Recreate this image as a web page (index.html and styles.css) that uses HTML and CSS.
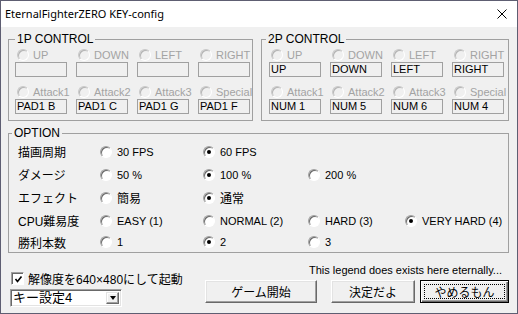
FILE: index.html
```html
<!DOCTYPE html>
<html lang="ja">
<head>
    <meta charset="UTF-8">
    <title>EternalFighterZERO KEY-config</title>
    <link rel="stylesheet" href="styles.css">
</head>
<body>
    <div class="window">
        <!-- Title bar -->
        <div class="titlebar">
            <span class="title">EternalFighterZERO KEY-config</span>
            <svg class="close" width="10" height="10" viewBox="0 0 10 10">
                <path d="M0.5 0.5L9.5 9.5M9.5 0.5L0.5 9.5" stroke="#000" stroke-width="1"/>
            </svg>
        </div>

        <div class="client">
            <!-- Key assignment -->
            <div class="controls">
                <fieldset class="group p1">
                    <legend>1P CONTROL</legend>
                    <div class="keys">
                        <div class="key"><div class="key-label"><span class="radio off"></span>UP</div><div class="keybox"></div></div>
                        <div class="key"><div class="key-label"><span class="radio off"></span>DOWN</div><div class="keybox"></div></div>
                        <div class="key"><div class="key-label"><span class="radio off"></span>LEFT</div><div class="keybox"></div></div>
                        <div class="key"><div class="key-label"><span class="radio off"></span>RIGHT</div><div class="keybox"></div></div>
                        <div class="key"><div class="key-label"><span class="radio off"></span>Attack1</div><div class="keybox">PAD1 B</div></div>
                        <div class="key"><div class="key-label"><span class="radio off"></span>Attack2</div><div class="keybox">PAD1 C</div></div>
                        <div class="key"><div class="key-label"><span class="radio off"></span>Attack3</div><div class="keybox">PAD1 G</div></div>
                        <div class="key"><div class="key-label"><span class="radio off"></span>Special</div><div class="keybox">PAD1 F</div></div>
                    </div>
                </fieldset>

                <fieldset class="group p2">
                    <legend>2P CONTROL</legend>
                    <div class="keys">
                        <div class="key"><div class="key-label"><span class="radio off"></span>UP</div><div class="keybox">UP</div></div>
                        <div class="key"><div class="key-label"><span class="radio off"></span>DOWN</div><div class="keybox">DOWN</div></div>
                        <div class="key"><div class="key-label"><span class="radio off"></span>LEFT</div><div class="keybox">LEFT</div></div>
                        <div class="key"><div class="key-label"><span class="radio off"></span>RIGHT</div><div class="keybox">RIGHT</div></div>
                        <div class="key"><div class="key-label"><span class="radio off"></span>Attack1</div><div class="keybox">NUM 1</div></div>
                        <div class="key"><div class="key-label"><span class="radio off"></span>Attack2</div><div class="keybox">NUM 5</div></div>
                        <div class="key"><div class="key-label"><span class="radio off"></span>Attack3</div><div class="keybox">NUM 6</div></div>
                        <div class="key"><div class="key-label"><span class="radio off"></span>Special</div><div class="keybox">NUM 4</div></div>
                    </div>
                </fieldset>
            </div>

            <!-- Options -->
            <fieldset class="group option">
                <legend>OPTION</legend>
                <div class="rows">
                    <div class="row">
                        <span class="name">描画周期</span>
                        <span class="opt"><span class="radio"></span>30 FPS</span>
                        <span class="opt"><span class="radio on"></span>60 FPS</span>
                    </div>
                    <div class="row">
                        <span class="name">ダメージ</span>
                        <span class="opt"><span class="radio"></span>50 %</span>
                        <span class="opt"><span class="radio on"></span>100 %</span>
                        <span class="opt"><span class="radio"></span>200 %</span>
                    </div>
                    <div class="row">
                        <span class="name">エフェクト</span>
                        <span class="opt ja"><span class="radio"></span>簡易</span>
                        <span class="opt ja"><span class="radio on"></span>通常</span>
                    </div>
                    <div class="row">
                        <span class="name">CPU難易度</span>
                        <span class="opt"><span class="radio"></span>EASY (1)</span>
                        <span class="opt"><span class="radio"></span>NORMAL (2)</span>
                        <span class="opt"><span class="radio"></span>HARD (3)</span>
                        <span class="opt"><span class="radio on"></span>VERY HARD (4)</span>
                    </div>
                    <div class="row">
                        <span class="name">勝利本数</span>
                        <span class="opt"><span class="radio"></span>1</span>
                        <span class="opt"><span class="radio on"></span>2</span>
                        <span class="opt"><span class="radio"></span>3</span>
                    </div>
                </div>
            </fieldset>

            <!-- Bottom bar -->
            <div class="footer">
                <div class="footer-left">
                    <div class="check-row">
                        <span class="checkbox">
                            <svg width="9" height="9" viewBox="0 0 9 9"><path d="M1.5 4L3.5 6.5L7.5 1.5" fill="none" stroke="#000" stroke-width="1.6"/></svg>
                        </span>
                        解像度を640×480にして起動
                    </div>
                    <div class="combo">
                        <span class="combo-text">キー設定4</span>
                        <span class="combo-btn"><span class="arrow"></span></span>
                    </div>
                </div>
                <div class="footer-right">
                    <div class="legend-text">This legend does exists here eternally...</div>
                    <div class="buttons">
                        <button class="btn start">ゲーム開始</button>
                        <button class="btn ok">決定だよ</button>
                        <button class="btn cancel default">やめるもん</button>
                    </div>
                </div>
            </div>
        </div>
    </div>
</body>
</html>
```

FILE: styles.css
```css
body {
    margin: 0;
    font-family: "Liberation Sans", "Noto Sans CJK JP", sans-serif;
    font-size: 12px;
    color: #000;
}

.window {
    width: 518px;
    height: 314px;
    box-sizing: border-box;
    border: 1px solid #5e5e72;
    background: #f0f0f0;
    display: flex;
    flex-direction: column;
}

.titlebar {
    height: 26px;
    background: #fff;
    display: flex;
    align-items: center;
    justify-content: space-between;
    padding: 0 10px 0 4px;
}

.title {
    font-family: "Noto Sans", sans-serif;
    font-size: 11px;
    margin-top: -1px;
}

.close {
    display: block;
}

.client {
    flex: 1;
    padding: 5px 8px 0 7px;
}

/* group boxes */
.group {
    margin: 0;
    min-width: 0;
    border: 1px solid #a0a0a0;
    box-sizing: border-box;
}

.group legend {
    padding: 0 2px;
    line-height: 14px;
    font-size: 12px;
}

.controls {
    display: flex;
    gap: 8px;
}

.p1 {
    width: 245px;
    padding: 2px 0 6px 6px;
}

.p2 {
    width: 248px;
    padding: 2px 0 6px 7px;
}

.p2 legend {
    margin-left: -3px;
}

.keys {
    display: grid;
    grid-template-columns: repeat(4, 52px);
    column-gap: 9px;
    row-gap: 8px;
}

.key-label {
    display: flex;
    align-items: center;
    height: 13px;
    white-space: nowrap;
    font-size: 11px;
    color: #a3a3a3;
}

.key-label .radio {
    margin: 0 4px 0 2px;
}

.keybox {
    margin-top: 1px;
    height: 15px;
    box-sizing: border-box;
    border: 1px solid #a0a0a0;
    padding-left: 1px;
    font-size: 11px;
    line-height: 13px;
    white-space: nowrap;
}

/* radio buttons */
.radio {
    display: inline-block;
    flex: none;
    position: relative;
    width: 12px;
    height: 12px;
    box-sizing: border-box;
    border-radius: 50%;
    border: 1px solid;
    border-color: #a0a0a0 #fff #fff #a0a0a0;
    box-shadow: inset 1px 1px #696969;
    background: #fff;
}

.radio.off {
    border-color: #c8c8c8 #fff #fff #c8c8c8;
    box-shadow: inset 1px 1px #b4b4b4;
    background: #f0f0f0;
}

.radio.on::after {
    content: "";
    position: absolute;
    left: 3px;
    top: 3px;
    width: 4px;
    height: 4px;
    border-radius: 50%;
    background: #000;
}

/* options */
.option {
    margin-top: 5px;
    width: 501px;
    padding: 0 0 0 9px;
}

.option legend {
    margin-left: -6px;
}

.rows {
    display: grid;
    grid-template-rows: repeat(4, 23px) 20px;
}

.row {
    display: grid;
    grid-template-columns: 82px 103px 105px 97px 1fr;
    align-items: center;
}

.name {
    font-size: 12px;
}

.opt {
    display: flex;
    align-items: center;
    font-size: 11px;
    white-space: nowrap;
}

.opt.ja {
    font-size: 12px;
}

.opt .radio {
    margin-right: 5px;
}

/* bottom */
.footer {
    display: flex;
    justify-content: space-between;
    padding-left: 2px;
}

.footer-left {
    padding-top: 19px;
}

.check-row {
    display: flex;
    align-items: center;
    height: 13px;
    padding-left: 1px;
    white-space: nowrap;
}

.checkbox {
    width: 13px;
    height: 13px;
    box-sizing: border-box;
    border: 1px solid;
    border-color: #a0a0a0 #fff #fff #a0a0a0;
    box-shadow: inset 1px 1px #696969;
    background: #fff;
    display: flex;
    align-items: center;
    justify-content: center;
    margin-right: 4px;
}

.checkbox svg {
    display: block;
    margin: 1px 0 0 1px;
}

.combo {
    margin-top: 4px;
    width: 112px;
    height: 18px;
    box-sizing: border-box;
    border: 1px solid;
    border-color: #a0a0a0 #fff #fff #a0a0a0;
    box-shadow: inset 1px 1px #696969, inset -1px -1px #e3e3e3;
    background: #fff;
    display: flex;
    align-items: center;
    justify-content: space-between;
    padding: 0 2px 0 2px;
}

.combo-text {
    font-size: 13px;
    line-height: 14px;
}

.combo-btn {
    width: 13px;
    height: 12px;
    box-sizing: border-box;
    background: #f0f0f0;
    border: 1px solid;
    border-color: #e3e3e3 #696969 #696969 #e3e3e3;
    box-shadow: inset -1px -1px #a0a0a0, inset 1px 1px #fff;
    display: flex;
    align-items: center;
    justify-content: center;
}

.arrow {
    width: 0;
    height: 0;
    border-left: 3.5px solid transparent;
    border-right: 3.5px solid transparent;
    border-top: 4px solid #000;
}

.footer-right {
    padding-top: 10px;
}

.legend-text {
    text-align: right;
    padding-right: 7px;
    font-size: 11px;
    line-height: 14px;
    white-space: nowrap;
}

.buttons {
    display: flex;
    margin-top: 3px;
}

.btn {
    height: 23px;
    box-sizing: border-box;
    padding: 0;
    background: #f0f0f0;
    border: 1px solid;
    border-color: #fff #696969 #696969 #fff;
    box-shadow: inset -1px -1px #a0a0a0, inset 1px 1px #e3e3e3;
    font-family: "Liberation Sans", "Noto Sans CJK JP", sans-serif;
    font-size: 12px;
    color: #000;
}

.start {
    width: 112px;
}

.ok {
    width: 84px;
    margin-left: 14px;
}

.cancel {
    width: 89px;
    margin-left: 5px;
}

.btn.default {
    position: relative;
    border: 1px solid #000;
    box-shadow: inset 1px 1px #fff, inset -1px -1px #696969, inset -2px -2px #a0a0a0;
}

.btn.default::after {
    content: "";
    position: absolute;
    left: 3px;
    top: 3px;
    right: 3px;
    bottom: 3px;
    border: 1px dotted #000;
}
```
